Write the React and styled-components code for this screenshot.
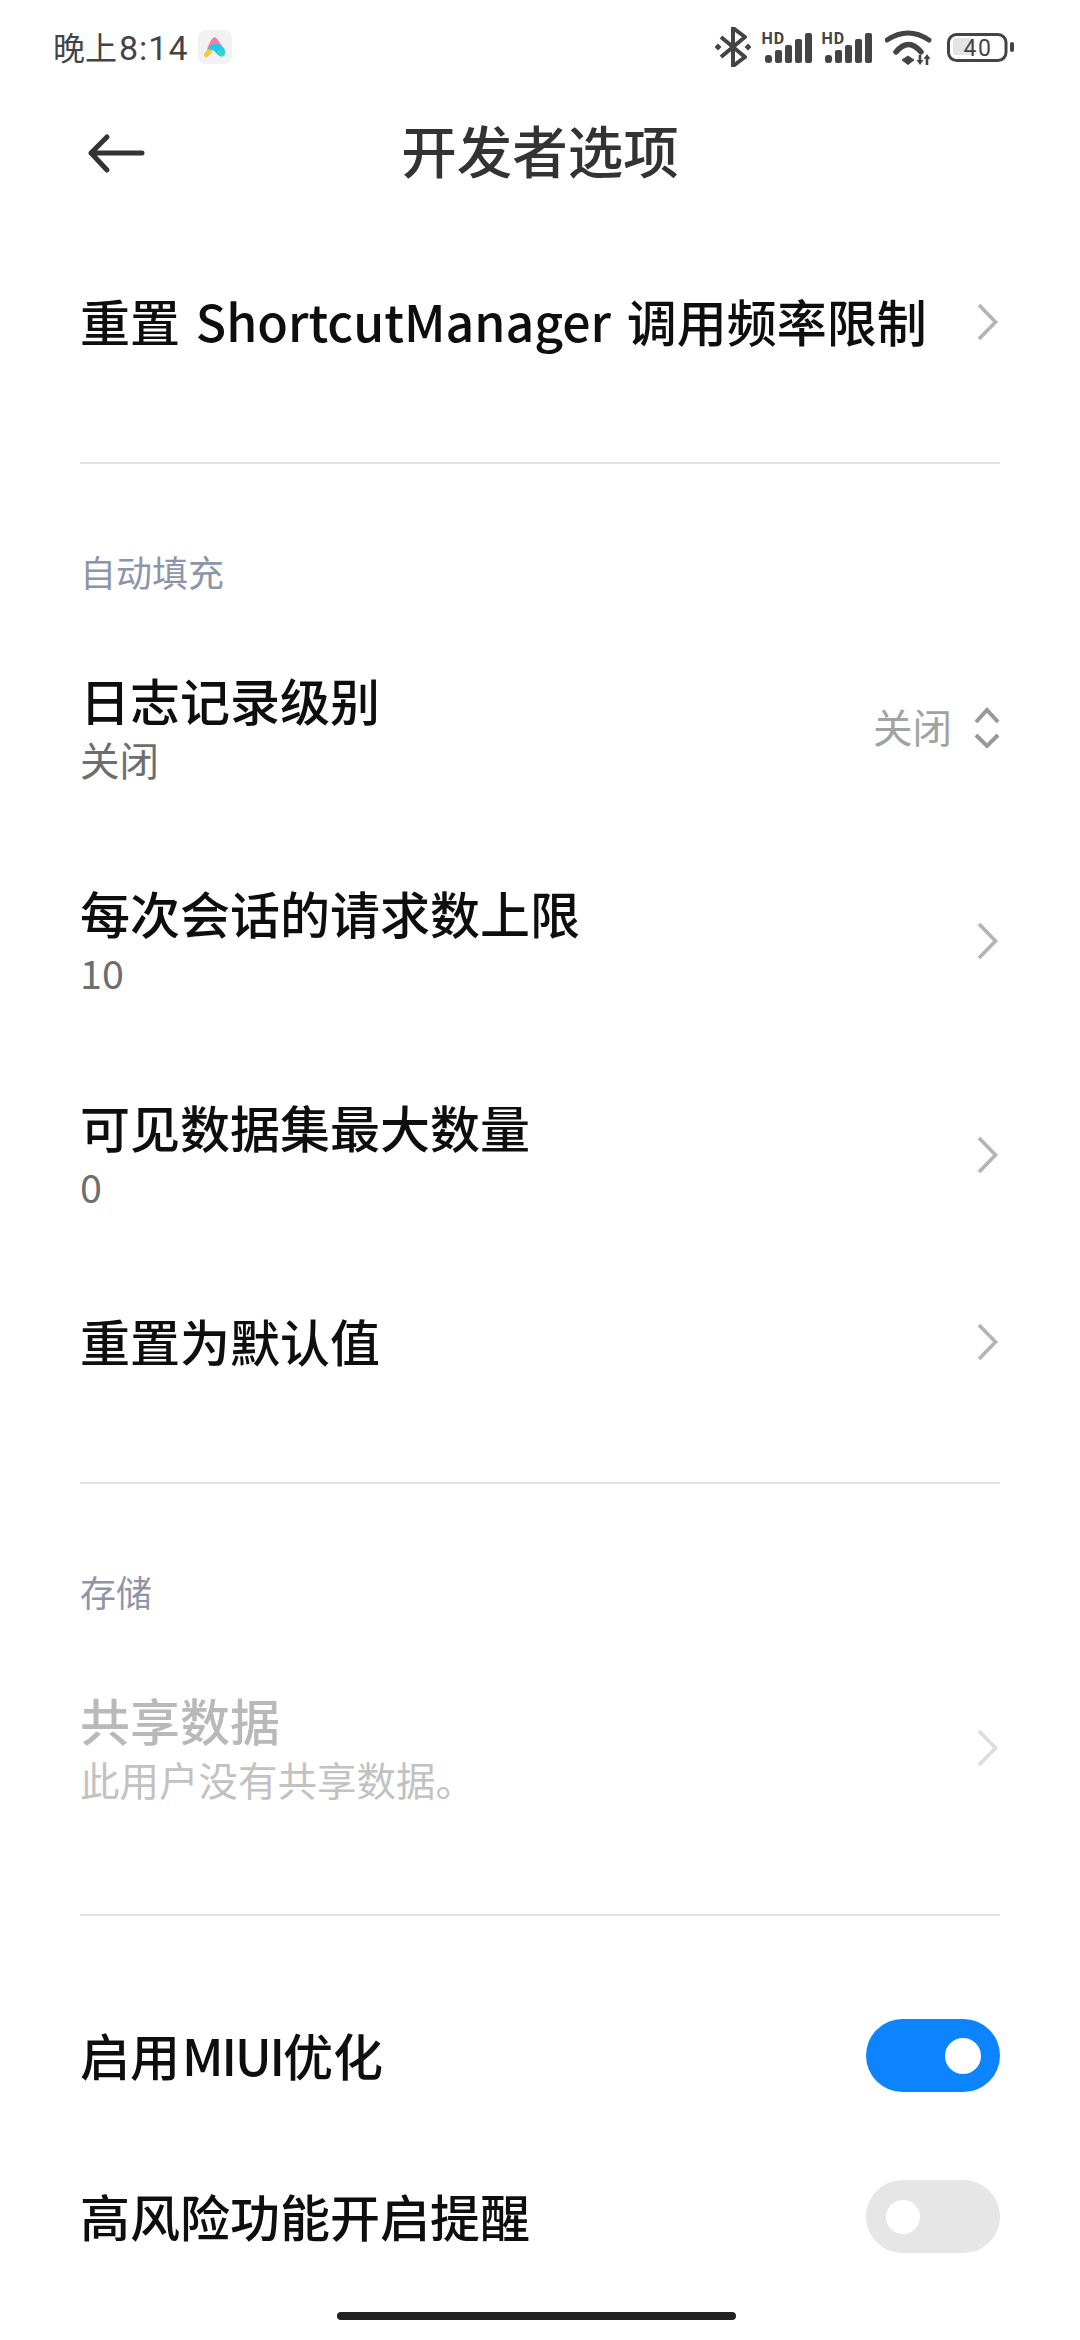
import React from "react";
import styled, { createGlobalStyle } from "styled-components";

const Global = createGlobalStyle`
  html, body { margin: 0; padding: 0; background: #fff; }
  * { box-sizing: border-box; }
`;
const Page = styled.div`
  position: relative; width: 1080px; height: 2340px; overflow: hidden; background: #fff;
  font-family: "Noto Sans CJK SC", "Noto Sans", sans-serif; color: #111;
`;
const StatusBar = styled.div`
  height: 90px; display: flex; align-items: center; justify-content: space-between;
  padding: 4px 66px 0 53px;
`;
const StatusLeft = styled.div`display: flex; align-items: center; gap: 9px;`;
const Clock = styled.span`font-size: 32px; line-height: 40px; color: #444; white-space: nowrap;`;
const ClockDigits = styled.span`font-family: "Roboto", sans-serif; font-size: 34px; margin-left: 2px; letter-spacing: 1px;`;
const AppTile = styled.span`
  width: 34px; height: 34px; border-radius: 8px; background: #f2f2f2;
  display: flex; align-items: center; justify-content: center;
`;
const StatusRight = styled.div`display: flex; align-items: center;`;
const StatusIcon = styled.svg`display: block; flex: none; margin-left: ${p => p.$ml ?? 0}px;`;
const Header = styled.header`
  height: 124px; margin-bottom: 27px; padding: 0 80px; display: grid;
  grid-template-columns: 60px 1fr 60px; align-items: center;
`;
const BackIcon = styled.svg`width: 60px; height: 40px; display: block; margin: 6px 0 0 7px; overflow: visible;`;
const Title = styled.h1`
  margin: 0; padding-bottom: 6px; text-align: center; font-size: 55.5px; line-height: 70px; font-weight: 500; color: #333;
`;
const Row = styled.div`
  height: ${p => (p.$tall ? 213.5 : 161)}px; padding: 0 80px; display: flex;
  align-items: center; justify-content: space-between;
`;
const Texts = styled.div`display: flex; flex-direction: column; padding-bottom: 4px;`;
const RowTitle = styled.div`
  font-size: 50px; line-height: 62px; font-weight: 500; color: ${p => (p.$off ? "#b9b9b9" : "#0e0e0e")};
  white-space: nowrap; word-spacing: ${p => (p.$wide ? 4.5 : 0)}px;
`;
const Latin = styled.span`letter-spacing: -2px; margin-left: 2px;`;
const RowSub = styled.div`
  font-size: 39.5px; line-height: 50px; color: ${p => (p.$off ? "#c2c2c2" : "#6e6e6e")};
  margin-top: 4px; white-space: nowrap;
`;
const Divider = styled.hr`
  border: 0; height: 2px; background: #e4e4e4; margin: ${p => p.$top}px 80px ${p => p.$bottom ?? 0}px;
`;
const SectionLabel = styled.div`
  padding: 0 80px; margin-top: 80px; height: 77px; font-size: 36px; line-height: 54px; color: #8e95ab;
`;
const Chevron = styled.svg`width: 24px; height: 40px; display: block; flex: none;`;
const Value = styled.div`display: flex; align-items: center; gap: 22px;`;
const ValueText = styled.span`font-size: 39.5px; line-height: 50px; color: #a2a2a2; padding-bottom: 4px;`;
const Toggle = styled.div`
  width: 134px; height: 73px; border-radius: 37px; flex: none; display: flex; align-items: center;
  background: ${p => (p.$on ? "#0d84ff" : "#e6e6e6")};
  justify-content: ${p => (p.$on ? "flex-end" : "flex-start")};
  padding: 0 ${p => (p.$on ? 19 : 20)}px;
`;
const Knob = styled.span`width: ${p => p.$size}px; height: ${p => p.$size}px; border-radius: 50%; background: #fff;`;
const HomeBar = styled.div`
  position: absolute; left: 337px; bottom: 20px; width: 399px; height: 8px; border-radius: 4px; background: #222;
`;

const Next = ({ off }) => (
  <Chevron viewBox="0 0 24 40">
    <path d="M3 3 L19.5 20 L3 37" fill="none" stroke={off ? "#dcdcdc" : "#b4b4b4"} strokeWidth="3.6" />
  </Chevron>
);

const Signal = ({ ml }) => (
  <StatusIcon $ml={ml} width="52" height="34" viewBox="0 0 52 34">
    <text x="1.5" y="13.5" fontSize="16" letterSpacing="1" fontWeight="700" fontFamily="Roboto, sans-serif" fill="#444">HD</text>
    <rect x="5" y="25" width="7" height="8" rx="3" fill="#444" />
    <rect x="15" y="20" width="7" height="13" rx="2" fill="#444" />
    <rect x="25" y="15" width="7" height="18" rx="2" fill="#444" />
    <rect x="35" y="9" width="7" height="24" rx="2" fill="#444" />
    <rect x="45" y="3" width="7" height="30" rx="2" fill="#444" />
  </StatusIcon>
);

export default function App() {
  return (
    <Page>
      <Global />
      <StatusBar>
        <StatusLeft>
          <Clock>晚上<ClockDigits>8:14</ClockDigits></Clock>
          <AppTile>
            <svg width="23" height="22" viewBox="0 0 24 23">
              <path d="M12 1 C14.5 1 20 10 21 15 L4 15 C5 10 9.5 1 12 1Z" fill="#f77f9e" />
              <path d="M5 13 C9 7 15 7 19 10 C23 13 24.5 17 22 20 C19 23 15 20 12 16 C10 14 7 13 5 13Z" fill="#27c4ee" />
              <path d="M14 16 C17 14 21 15 23 17 C23 21 19 23 16 20Z" fill="#2fdcbc" />
              <path d="M1 19 C3 15 7 13 10 15 C8 19 5 23 2 22 C1 21 1 20 1 19Z" fill="#f7cb2f" />
            </svg>
          </AppTile>
        </StatusLeft>
        <StatusRight>
          <StatusIcon width="36" height="40" viewBox="0 0 36 40">
            <path d="M6 10 L30 30 L18 39 L18 1 L30 10 L6 30" fill="none" stroke="#444" strokeWidth="4" strokeLinejoin="round" />
            <path d="M3 16.5 L6.5 20 L3 23.5 L-0.5 20Z M33 16.5 L36.5 20 L33 23.5 L29.5 20Z" fill="#444" />
          </StatusIcon>
          <Signal ml={9} />
          <Signal ml={8} />
          <StatusIcon $ml={13} width="48" height="36" viewBox="0 0 48 36">
            <path d="M2 11 Q23 -3 44 11" fill="none" stroke="#444" strokeWidth="5" strokeLinecap="round" />
            <path d="M11 23 Q23.5 8 36 23" fill="none" stroke="#444" strokeWidth="5.5" strokeLinecap="round" />
            <path d="M17 31 L23 27 L29 31 L23 35.5Z" fill="#444" stroke="#444" strokeWidth="1" strokeLinejoin="round" />
            <path d="M35 26 V33 M42 28 V36" stroke="#444" strokeWidth="2.6" />
            <path d="M31.5 31 L35 36 L38.5 31Z M38.5 30 L42 25 L45.5 30Z" fill="#444" />
          </StatusIcon>
          <StatusIcon $ml={13} width="68" height="32" viewBox="0 0 68 32">
            <rect x="2.5" y="3.5" width="57.5" height="26" rx="8" fill="none" stroke="#444" strokeWidth="3" />
            <rect x="7" y="7" width="20" height="17" rx="2" fill="#e4e4e4" />
            <text x="32" y="25" textAnchor="middle" fontSize="23" letterSpacing="1.5" fontFamily="Roboto, sans-serif" fill="#444">40</text>
            <rect x="64" y="11" width="4" height="10" rx="2" fill="#444" />
          </StatusIcon>
        </StatusRight>
      </StatusBar>

      <Header>
        <BackIcon viewBox="0 0 60 40">
          <path d="M4 18 L55 18 M20 2 L4 18 L20 35" fill="none" stroke="#333" strokeWidth="5" strokeLinecap="round" strokeLinejoin="round" />
        </BackIcon>
        <Title>开发者选项</Title>
      </Header>

      <Row>
        <Texts><RowTitle $wide>重置 ShortcutManager 调用频率限制</RowTitle></Texts>
        <Next />
      </Row>
      <Divider $top={60} />

      <SectionLabel>自动填充</SectionLabel>
      <Row $tall>
        <Texts>
          <RowTitle>日志记录级别</RowTitle>
          <RowSub>关闭</RowSub>
        </Texts>
        <Value>
          <ValueText>关闭</ValueText>
          <svg width="26" height="42" viewBox="0 0 26 42">
            <path d="M2 15 L13 3 L24 15 M2 28 L13 39 L24 28" fill="none" stroke="#999" strokeWidth="4" />
          </svg>
        </Value>
      </Row>
      <Row $tall>
        <Texts>
          <RowTitle>每次会话的请求数上限</RowTitle>
          <RowSub>10</RowSub>
        </Texts>
        <Next />
      </Row>
      <Row $tall>
        <Texts>
          <RowTitle>可见数据集最大数量</RowTitle>
          <RowSub>0</RowSub>
        </Texts>
        <Next />
      </Row>
      <Row>
        <Texts><RowTitle>重置为默认值</RowTitle></Texts>
        <Next />
      </Row>
      <Divider $top={59.5} />

      <SectionLabel>存储</SectionLabel>
      <Row $tall>
        <Texts>
          <RowTitle $off>共享数据</RowTitle>
          <RowSub $off>此用户没有共享数据。</RowSub>
        </Texts>
        <Next off />
      </Row>
      <Divider $top={59.5} $bottom={59} />

      <Row>
        <Texts><RowTitle>启用<Latin>MIUI</Latin>优化</RowTitle></Texts>
        <Toggle $on><Knob $size={36} /></Toggle>
      </Row>
      <Row>
        <Texts><RowTitle>高风险功能开启提醒</RowTitle></Texts>
        <Toggle><Knob $size={34} /></Toggle>
      </Row>
      <HomeBar />
    </Page>
  );
}
